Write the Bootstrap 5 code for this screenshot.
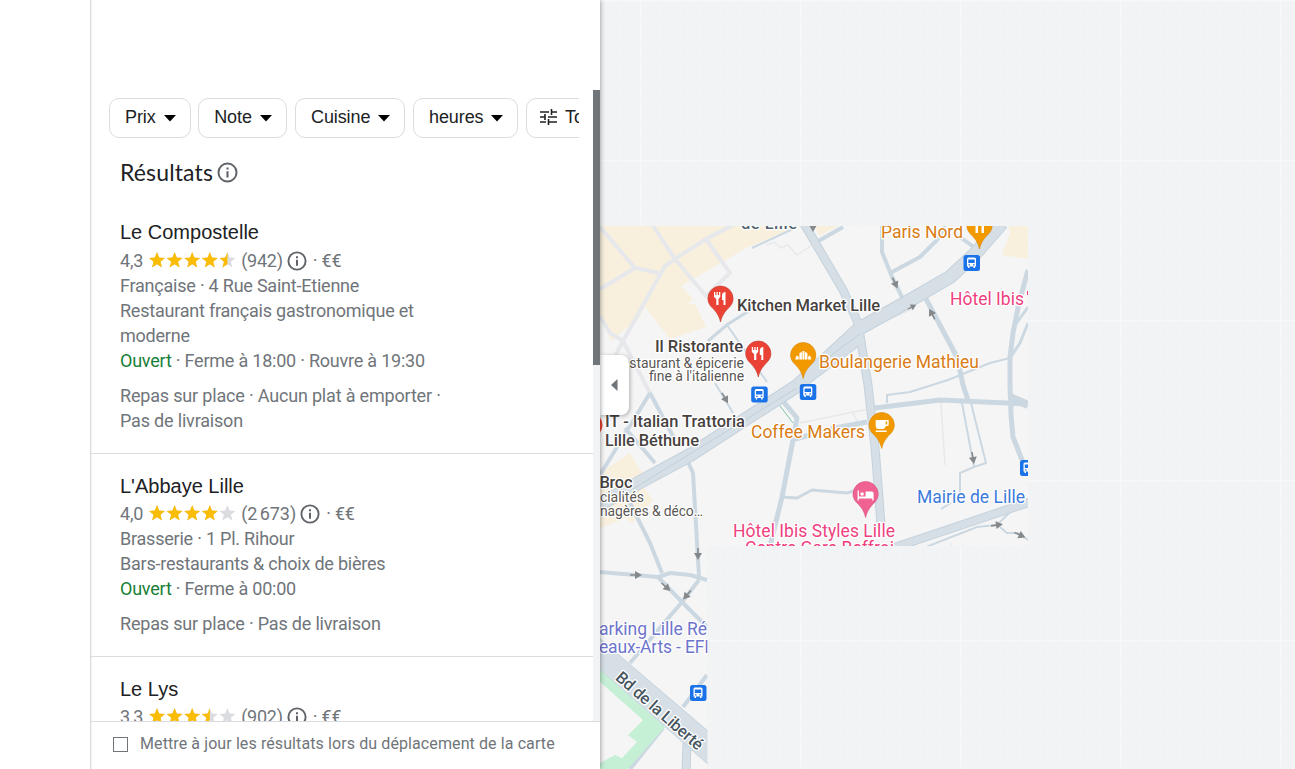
<!DOCTYPE html>
<html lang="fr">
<head>
<meta charset="utf-8">
<title>Restaurants à Lille</title>
<meta name="viewport" content="width=device-width, initial-scale=1">
<link href="https://cdn.jsdelivr.net/npm/bootstrap@5.3.0/dist/css/bootstrap.min.css" rel="stylesheet">
<style>
body{font-family:Roboto,"Liberation Sans",sans-serif;color:#202124;background:#fff}
.gutter{width:90px;z-index:3}
.panel{width:510px;z-index:2;background:#fff;box-shadow:inset 1px 0 #dcdddf,inset 2px 0 #f3f3f4,0 0 5px rgba(0,0,0,.45)}
.panel-head{height:90px}
.filters{margin:8px 14px 0 19px;gap:8px}
.chip{height:40px;border:1px solid #dadce0;border-radius:10px;background:#fff;color:#202124;font:18px/34px "Liberation Sans",Arial,sans-serif;padding:0 14px 2px 15px;white-space:nowrap;flex:none;letter-spacing:-.1px}
.chip svg{margin-left:8px}
.results-title{font:23px/30px Lato,sans-serif;letter-spacing:.14px;height:62px;padding:19px 0 0 30px}
.place{padding:18px 0 20px 30px;border-bottom:1px solid #dadce0;font-size:18px;line-height:25px;color:#70757a;letter-spacing:-.22px}
.place h2{font:20px/29px "Liberation Sans",Arial,sans-serif;color:#202124;margin:0;letter-spacing:0}
.place:first-of-type h2{margin-bottom:1px}
.rate-row{height:25px}
.offer{margin-top:10px;letter-spacing:-.18px}
.open-now{color:#188038}
.track{width:7px;background:#f1f3f4}
.thumb{height:275px;background:#70757a}
.panel-foot{height:48px;border-top:1px solid #dadce0;font-size:16px;letter-spacing:.1px;color:#70757a;padding:0 0 3px 23px}
.box{width:15px;height:15px;border:1px solid #70757a;margin-right:12px;margin-top:1px}
.map-area{background:#f1f3f4}
.handle{left:0;top:355px;width:29px;height:60px;background:#fff;border-radius:0 8px 8px 0;box-shadow:1px 1px 4px rgba(0,0,0,.3)}
.lb{font-family:Roboto,sans-serif;paint-order:stroke;stroke:#fff;stroke-width:2.5px;stroke-linejoin:round}
</style>
</head>
<body class="vh-100 overflow-hidden">
<svg width="0" height="0" class="position-absolute">
  <defs>
    <symbol id="info" viewBox="0 0 20 20"><circle cx="10" cy="10" r="8.6" fill="none" stroke="#5f6368" stroke-width="1.9"/><path d="M9 5.300h2v1.900H9zM9 8.800h2v6H9z" fill="#5f6368"/></symbol>
    <path id="st" d="M8 0l2.200 5.600 5.800.4-4.500 3.800L13 15.600 8 12.300 3 15.600l1.500-5.800L0 6l5.800-.4z"/>
    <clipPath id="half"><path d="M0 0h8v16H0z"/></clipPath>
    <symbol id="five" viewBox="0 0 88 16"><use href="#st"/><use href="#st" x="17.6"/><use href="#st" x="35.2"/><use href="#st" x="52.8"/><use href="#st" x="70.4"/></symbol>
    <symbol id="caret" viewBox="0 0 12 7"><path d="M0 0h12L6 6.500z"/></symbol>
  </defs>
</svg>
<div class="d-flex h-100">
  <div class="gutter flex-shrink-0 bg-white position-relative"></div>
  <aside class="panel d-flex flex-column flex-shrink-0 position-relative">
    <div class="panel-head flex-shrink-0"></div>
    <div class="d-flex flex-grow-1 overflow-hidden">
      <div class="flex-grow-1 overflow-hidden">
        <div class="filters d-flex overflow-hidden">
          <button class="chip" style="width:81.500px;margin-right:-.5px">Prix<svg width="12" height="7"><use href="#caret"/></svg></button>
          <button class="chip" style="width:89px">Note<svg width="12" height="7"><use href="#caret"/></svg></button>
          <button class="chip" style="width:110px">Cuisine<svg width="12" height="7"><use href="#caret"/></svg></button>
          <button class="chip" style="width:105px">heures<svg width="12" height="7"><use href="#caret"/></svg></button>
          <button class="chip d-flex align-items-center" style="padding-left:13px"><svg width="17" height="16" viewBox="0 0 17 16" fill="none" stroke="#202124" stroke-width="1.6" style="margin:0 8px 0 0"><path d="M0 3h9M12 3h5M11.500 0v6M0 8h5M8 8h9M5 5v6M0 13h6M9 13h8M8.500 10v6"/></svg>Tous les filtres</button>
        </div>
        <div class="results-title d-flex align-items-start">Résultats<svg style="margin:5px 0 0 4px" width="21" height="21"><use href="#info"/></svg></div>
        <section>
        <article class="place">
          <h2>Le Compostelle</h2>
          <div class="rate-row d-flex align-items-center"><span>4,3</span><svg width="88" height="16" style="margin:-2px 4px 0 6px"><use href="#five" fill="#dadce0"/><g fill="#fbbc04"><use href="#st"/><use href="#st" x="17.6"/><use href="#st" x="35.2"/><use href="#st" x="52.8"/><g transform="translate(70.4)"><use href="#st" clip-path="url(#half)"/></g></g></svg><span>(942)</span><svg width="20" height="20" style="margin:0 6px 0 4px"><use href="#info"/></svg><span>· €€</span></div>
          <div>Française · 4 Rue Saint-Etienne</div>
          <div>Restaurant français gastronomique et<br>moderne</div>
          <div><span class="open-now">Ouvert</span> · Ferme à 18:00 · Rouvre à 19:30</div>
          <div class="offer">Repas sur place · Aucun plat à emporter ·<br>Pas de livraison</div>
        </article>
        <article class="place">
          <h2>L'Abbaye Lille</h2>
          <div class="rate-row d-flex align-items-center"><span>4,0</span><svg width="88" height="16" style="margin:-1px 4px 0 6px"><use href="#five" fill="#dadce0"/><g fill="#fbbc04"><use href="#st"/><use href="#st" x="17.6"/><use href="#st" x="35.2"/><use href="#st" x="52.8"/></g></svg><span>(2&#8239;673)</span><svg width="20" height="20" style="margin:0 6px 0 4px"><use href="#info"/></svg><span>· €€</span></div>
          <div>Brasserie · 1 Pl. Rihour</div>
          <div>Bars-restaurants &amp; choix de bières</div>
          <div><span class="open-now">Ouvert</span> · Ferme à 00:00</div>
          <div class="offer">Repas sur place · Pas de livraison</div>
        </article>
        <article class="place">
          <h2>Le Lys</h2>
          <div class="rate-row d-flex align-items-center"><span>3,3</span><svg width="88" height="16" style="margin:-1px 4px 0 6px"><use href="#five" fill="#dadce0"/><g fill="#fbbc04"><use href="#st"/><use href="#st" x="17.6"/><use href="#st" x="35.2"/><g transform="translate(52.8)"><use href="#st" clip-path="url(#half)"/></g></g></svg><span>(902)</span><svg width="20" height="20" style="margin:0 6px 0 4px"><use href="#info"/></svg><span>· €€</span></div>
        </article>
        </section>
      </div>
      <div class="track flex-shrink-0"><div class="thumb"></div></div>
    </div>
    <div class="panel-foot d-flex align-items-center flex-shrink-0"><span class="box"></span><span>Mettre à jour les résultats lors du déplacement de la carte</span></div>
  </aside>
  <main class="map-area flex-grow-1 position-relative overflow-hidden">
    <svg class="d-block" width="695" height="769" viewBox="600 0 695 769">
      <defs>
        <pattern id="minor" width="20" height="20" patternUnits="userSpaceOnUse"><path d="M0 .5h20M.5 0v20" stroke="#f4f5f6" fill="none"/></pattern>
        <pattern id="major" width="160" height="160" patternUnits="userSpaceOnUse"><path d="M0 .5h160M.5 0v160" stroke="#f7f8f9" stroke-width="2" fill="none"/></pattern>
        <clipPath id="tiles"><path d="M600 226h428v320H707.500v223H600z"/></clipPath>
        <path id="pin" d="M0 36C-1.500 29-5 25-8.500 21.500C-11.300 18.700-12.600 16-12.600 12.500A12.600 12.500 0 0 1 12.600 12.500C12.600 16 11.300 18.700 8.500 21.500C5 25 1.500 29 0 36z"/>
        <g id="food" fill="#fff"><path d="M-6.500 6h1.300v3h1.200V6h1.300v3h1.200V6H-.2v5l-1.800 2v6h-2.200v-6l-2.300-2zM5 6v13H3v-5H1.500V9Q2 6 5 6z"/></g>
        <g id="bus"><rect x="-8" y="-8" width="16.500" height="16" rx="2.500" fill="#1a73e8"/><path fill="#fff" d="M-4.500-4q0-1.500 1.500-1.500h6q1.500 0 1.500 1.500v7.500h-1V5H2V3.500h-4V5h-1.500V3.500h-1z"/><path fill="#1a73e8" d="M-3.200-3.500h6.400V0h-6.400zM-3 1.200h1.500v1.300H-3zM1.500 1.200H3v1.300H1.500z"/></g>
        <path id="arw" d="M-6-.8h5V-4L6 0-1 4V.8h-5z" fill="#85898c"/>
      </defs>
      <path fill="url(#minor)" d="M600 0h695v769H600z"/><path fill="url(#major)" d="M600 0h695v769H600z"/>
      <g clip-path="url(#tiles)">
        <path fill="#f5f5f5" d="M600 226h428v320H707.500v223H600z"/>
        <path fill="#f8f0dd" d="M600 226h202l-20 7-34 14-67 39 12 13-5 5h7l11 23-36 12-25-32-5 10-29 24-11-27zM630 453l10 17 10 5-8 10 11 15-21 23-6-5-26 10v-55zM1008 226l2 7-8 22 26 4v-33zM815 226h23l-19 10z"/>
        <g fill="none" stroke="#e6e8eb" stroke-width="4" stroke-linejoin="round">
          <path d="M735 224 706 239 675 259 665 266 623 341 612 362M600 227l35 41 24 5M635 268l-35 21M653 226l22 33 31 37 24-23-24-34M600 316l10 17 13 8 27 52"/>
          <path stroke-width="1.500" d="M767 245l7-3 7 6 7-3 9 10 9-6M800 253l15-10M863 331l51-23M800 423l53-11 22-4M852 412l6 10M941 403l4 62M950 543l2 5"/>
        </g>
        <g fill="none" stroke="#ccd8e1" stroke-linejoin="round">
          <path stroke-width="4" d="M843 227l-28 16M882 226v26l10 25 14 28M892 272l28-15 17-17 8-14M960 237l18 13M650 393l-50 82M650 393l25 47M625 428l30 35M687 460l6 13 6 104M630 503l20 40 12 30M600 572l58 5 12-4 20 2 17 5M699 580l-17 22-52 61M658 577l24 25 25 25M707 675l-24 32M663 728l-33 41"/>
          <path stroke-width="5" d="M782 400l15 18-4 22-11 57-12 49M925 297l32 60 6 28 5 15M1028 270l-9 33-6 30-3 24v28l1 30 2 22 9 23 6 13M875 408l65-8 88 4M867 422l-27 5-45 12"/>
          <path stroke-width="3" d="M782 497l15 1 15-8 35 3 10-3M1028 307l-12 17M1028 323l-8 20-10 15"/>
          <path stroke-width="2" d="M752 248l43-20M1010 358l-20 5-42 17-38 12-23 3v8M962 403l12 64-14 6v20M971 403l15 60-12 4M926 547l51-20 20-2 15-15M1000 527l7 6h11l10 7M727 325l40 57M715 383l18 30M951 503l-10 6"/>
          <path stroke-width="3" d="M708 341l20-17 24-15"/>
          <path stroke-width="8" d="M1010 397l18 8"/>
        </g>
        <path fill="none" stroke="#7fc4a8" d="M777 402l16 21"/>
        <g fill="none" stroke-linejoin="round">
          <g stroke="#c5d2dc"><path stroke-width="9" d="M803 222l40 68 15 33 10 62 7 62 6 77M687 743l-1 30"/><path stroke-width="9" d="M890 549l140-47"/><path stroke-width="14" d="M590 510 640 482 690 455 797 386 860 328 907 302 950 277 975 254 1002 223"/><path stroke-width="10" d="M797 387l65-49"/></g>
          <g stroke="#d6dfe6"><path stroke-width="7" d="M803 222l40 68 15 33 10 62 7 62 6 77M687 743l-1 30"/><path stroke-width="7" d="M890 549l140-47"/><path stroke-width="12" d="M590 510 640 482 690 455 797 386 860 328 907 302 950 277 975 254 1002 223"/><path stroke-width="8" d="M797 387l65-49"/></g>
          <path stroke="#c2cfd9" d="M633 489l60-37 104-64M829 357l32-24"/>
        </g>
        <path fill="#d6dfe6" stroke="#c5d2dc" d="M599 638l110 94v33l-110-96z"/>
        <path fill="#c5f0d6" d="M600 670l65 57-37 42h-28v-6l15-8 7 3 15-16-9-7 15-15-43-38z"/>
        <use href="#arw" transform="translate(895,283) rotate(65)"/><use href="#arw" transform="translate(912,307) rotate(-28) scale(.8)"/><use href="#arw" transform="translate(932,314) rotate(-118)"/><use href="#arw" transform="translate(973,458) rotate(80)"/><use href="#arw" transform="translate(997,525) rotate(-8)"/><use href="#arw" transform="translate(1020,535) rotate(25)"/><use href="#arw" transform="translate(725,398) rotate(60)"/><use href="#arw" transform="translate(636,575)"/><use href="#arw" transform="translate(666,587) rotate(42)"/><use href="#arw" transform="translate(687,595) rotate(130)"/><use href="#arw" transform="translate(698,554) rotate(90)"/><use href="#arw" transform="translate(813,226) rotate(90)"/>
        <circle cx="590" cy="425" r="12.500" fill="#ea4335"/>
        <g stroke-width=".6">
          <g transform="translate(720.500,286)"><use href="#pin" fill="#ea4335" stroke="#c5382c"/><use href="#food"/></g>
          <g transform="translate(758.300,341)"><use href="#pin" fill="#ea4335" stroke="#c5382c"/><use href="#food"/></g>
          <g transform="translate(803.200,342.500)"><use href="#pin" fill="#f29900" stroke="#d98600"/><path fill="#fff" d="M-8 17l1.300-4 2.200 1v3zM-3.800 17v-6.500l2.500-1V17zM-.8 17V8.500H1.200V17zM1.700 17V9.500l2.500 1V17zM4.900 17v-3l2-1L8.200 17z"/></g>
          <g transform="translate(979.500,213)"><use href="#pin" fill="#f29900" stroke="#d98600"/><path fill="#fff" d="M-4 6h2.500v14H-4zM2 6h2.500v14H2z"/></g>
          <g transform="translate(881.700,412.500)"><use href="#pin" fill="#f29900" stroke="#d98600"/><path fill="#fff" fill-rule="evenodd" d="M-6 7.500H7V12Q7 13.500 4 13.500 3.500 16.500 1 16.500h-4q-3 0-3-3.500zM4 9v3h1.500V9zM-6 18H5v1.500H-6z"/></g>
          <g transform="translate(865.600,481.500)"><use href="#pin" fill="#f06292" stroke="#d94f7e"/><path fill="#fff" d="M-8 9h1.300v6H0V10h6q2 0 2 2v7H6.700v-2H-6.700v2H-8z"/><circle cx="-3.500" cy="12.500" r="1.800" fill="#fff"/></g>
        </g>
        <use href="#bus" x="971.500" y="263"/><use href="#bus" x="759.200" y="394.500"/><use href="#bus" x="807.800" y="392"/><use href="#bus" x="1028" y="468"/><use href="#bus" x="698" y="693"/>
        <g class="lb" font-size="16.500" font-weight="500" fill="#47423f">
          <text x="737" y="310.500" textLength="143">Kitchen Market Lille</text>
          <text x="655" y="352" textLength="88">Il Ristorante</text>
          <text x="605" y="427" textLength="140">IT - Italian Trattoria</text>
          <text x="605" y="445.500" textLength="94">Lille Béthune</text>
          <text x="599.500" y="488" textLength="33">Broc</text>
          <text x="741" y="228.500" textLength="56" fill="#52626e">de Lille</text>
          <text transform="translate(614.500,679) rotate(41)" textLength="110" fill="#47565f">Bd de la Liberté</text>
        </g>
        <g class="lb" font-size="14" fill="#5a5653">
          <text x="622" y="367.500" textLength="122">estaurant &amp; épicerie</text>
          <text x="649" y="381" textLength="95">fine à l'italienne</text>
          <text x="600" y="502" textLength="44">cialités</text>
          <text x="600" y="516" textLength="103">nagères &amp; déco…</text>
        </g>
        <g class="lb" font-size="17.500" fill="#d97c15">
          <text x="819" y="367.500" textLength="160">Boulangerie Mathieu</text>
          <text x="751" y="437.500" textLength="114">Coffee Makers</text>
          <text x="881" y="237.500" textLength="82">Paris Nord</text>
        </g>
        <g class="lb" font-size="17.500" fill="#ee3f7e">
          <text x="950" y="305" textLength="74">Hôtel Ibis</text>
          <text x="733" y="536.500" textLength="162">Hôtel Ibis Styles Lille</text>
          <text x="745" y="553.500" textLength="149">Centre Gare Beffroi</text>
        </g>
        <text class="lb" font-size="17.500" fill="#3c7bdc" x="917" y="502.500" textLength="108">Mairie de Lille</text>
        <g class="lb" font-size="17.500" fill="#6d74cc">
          <text x="599" y="635" textLength="108">arking Lille Ré</text>
          <text x="599" y="652.500" textLength="110">eaux-Arts - EFI</text>
        </g>
        <path d="M1027 291h1v4h-1z" fill="#ee3f7e"/>
      </g>
    </svg>
    <div class="handle position-absolute d-flex align-items-center justify-content-center"><svg width="7" height="12"><path d="M6.500 0v12L0 6z" fill="#70757a"/></svg></div>
  </main>
</div>
<script src="https://cdn.jsdelivr.net/npm/bootstrap@5.3.0/dist/js/bootstrap.bundle.min.js"></script>
</body>
</html>
